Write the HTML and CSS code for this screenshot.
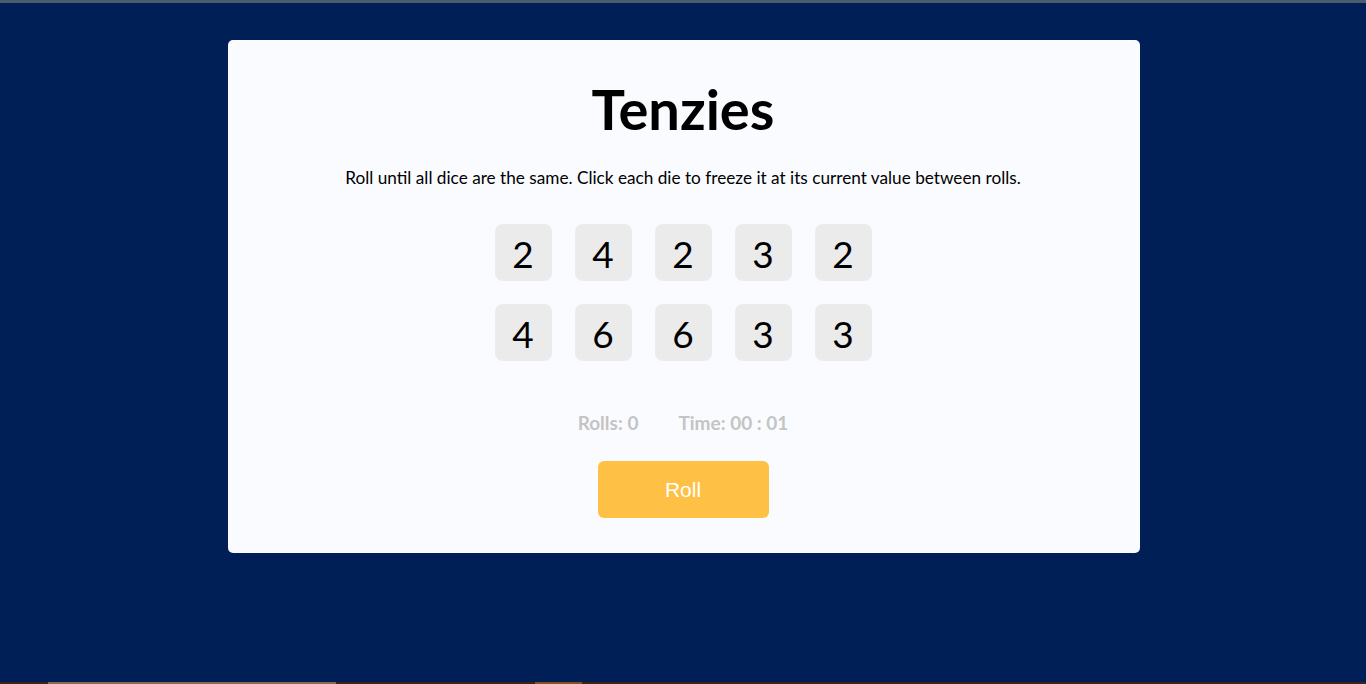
FILE: index.html
```html
<!DOCTYPE html>
<html lang="en">
<head>
<meta charset="utf-8">
<title>Tenzies</title>
<link rel="stylesheet" href="styles.css">
</head>
<body>
<div class="topbar"></div>
<main class="stage">
  <section class="card">
    <h1 class="title">Tenzies</h1>
    <p class="instructions">Roll until all dice are the same. Click each die to freeze it at its current value between rolls.</p>
    <div class="dice">
      <div class="die">2</div>
      <div class="die">4</div>
      <div class="die">2</div>
      <div class="die">3</div>
      <div class="die">2</div>
      <div class="die">4</div>
      <div class="die">6</div>
      <div class="die">6</div>
      <div class="die">3</div>
      <div class="die">3</div>
    </div>
    <div class="stats">
      <span class="stat">Rolls: 0</span>
      <span class="stat">Time: 00 : 01</span>
    </div>
    <button class="roll">Roll</button>
  </section>
</main>
<div class="taskbar">
  <span class="tb-item tb-wide"></span>
  <span class="tb-item tb-active"></span>
</div>
</body>
</html>
```
FILE: styles.css
```css
html, body {
  margin: 0;
  padding: 0;
}
body {
  background: #001f57;
  font-family: "Lato", "Open Sans", sans-serif;
  height: 684px;
  display: flex;
  flex-direction: column;
  overflow: hidden;
}
.topbar {
  height: 3px;
  background: #4b5d6b;
  flex: none;
}
.stage {
  flex: 1;
  display: flex;
  justify-content: center;
  align-items: flex-start;
  padding-top: 37px;
  padding-left: 2px;
}
.card {
  width: 912px;
  height: 513px;
  box-sizing: border-box;
  background: #f9fbff;
  border-radius: 5px;
  display: flex;
  flex-direction: column;
  align-items: center;
  padding-top: 35px;
  padding-right: 2px;
}
.title {
  margin: 0;
  font-size: 56px;
  font-weight: 700;
  line-height: 68px;
  color: #000;
}
.instructions {
  margin: 25px 0 0;
  font-size: 17.2px;
  line-height: 20px;
  color: #000;
}
.dice {
  margin-top: 36px;
  display: grid;
  grid-template-columns: repeat(5, 57px);
  gap: 23px;
}
.die {
  width: 57px;
  height: 57px;
  background: #ebebeb;
  border-radius: 8px;
  display: flex;
  align-items: center;
  justify-content: center;
  font-size: 37px;
  padding-top: 2px;
  box-sizing: border-box;
  color: #000;
}
.stats {
  margin-top: 49px;
  display: flex;
  gap: 40px;
  font-size: 19px;
  font-weight: 700;
  color: #c4c4c4;
  line-height: 26px;
}
.roll {
  margin-top: 25px;
  width: 171px;
  height: 57px;
  border: none;
  border-radius: 6px;
  background: #ffc145;
  color: #fff;
  font-family: "Liberation Sans", Arial, sans-serif;
  font-size: 21px;
  cursor: pointer;
}
.taskbar {
  height: 2px;
  flex: none;
  background: #3b2616;
  position: relative;
}
.tb-item {
  position: absolute;
  top: 0;
  height: 2px;
}
.tb-wide {
  left: 48px;
  width: 288px;
  background: #8a6a50;
}
.tb-active {
  left: 535px;
  width: 47px;
  background: #8b4e1e;
}
```
